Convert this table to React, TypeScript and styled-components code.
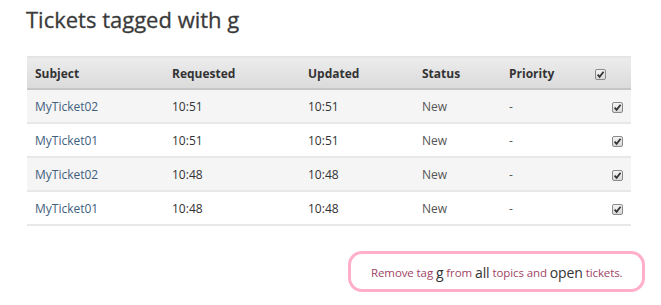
import styled, { createGlobalStyle } from "styled-components";

type Ticket = {
    subject: string;
    requested: string;
    updated: string;
    status: string;
    priority: string;
};

const tickets: Ticket[] = [
    { subject: "MyTicket02", requested: "10:51", updated: "10:51", status: "New", priority: "-" },
    { subject: "MyTicket01", requested: "10:51", updated: "10:51", status: "New", priority: "-" },
    { subject: "MyTicket02", requested: "10:48", updated: "10:48", status: "New", priority: "-" },
    { subject: "MyTicket01", requested: "10:48", updated: "10:48", status: "New", priority: "-" },
];

const CheckBox = () => (
    <Box>
        <svg width="9" height="9" viewBox="0 0 9 9">
            <path d="M1.6 4.6 L3.6 6.8 L7.6 1.8" fill="none" stroke="#333" strokeWidth="1.8" />
        </svg>
    </Box>
);

const App = () => {
    return (
        <Page>
            <GlobalStyle />
            <Title>Tickets tagged with g</Title>

            <Table>
                <colgroup>
                    <col style={{ width: 137 }} />
                    <col style={{ width: 136 }} />
                    <col style={{ width: 114 }} />
                    <col style={{ width: 87 }} />
                    <col style={{ width: 86 }} />
                    <col style={{ width: 44 }} />
                </colgroup>
                <thead>
                    <tr>
                        <Th>Subject</Th>
                        <Th>Requested</Th>
                        <Th>Updated</Th>
                        <Th>Status</Th>
                        <Th>Priority</Th>
                        <Th><CheckBox /></Th>
                    </tr>
                </thead>
                <tbody>
                    {tickets.map((t, i) => (
                        <Row key={i} $striped={i % 2 === 0}>
                            <Td><SubjectLink>{t.subject}</SubjectLink></Td>
                            <Td>{t.requested}</Td>
                            <Td>{t.updated}</Td>
                            <Td $muted>{t.status}</Td>
                            <Td $muted>{t.priority}</Td>
                            <CheckCell><CheckBox /></CheckCell>
                        </Row>
                    ))}
                </tbody>
            </Table>

            <Footer>
                <Notice>
                    Remove tag <Strong>g</Strong> from <Strong>all</Strong> topics and{" "}
                    <Strong>open</Strong> tickets.
                </Notice>
            </Footer>
        </Page>
    );
};

// --- Styled Components ---

const GlobalStyle = createGlobalStyle`
    body {
        margin: 0;
        background: #fff;
        font-family: "Open Sans", "Noto Sans", sans-serif;
    }
`;

const Page = styled.div`
    width: 661px;
    height: 305px;
    padding: 0 30px 0 27px;
    box-sizing: border-box;
    overflow: hidden;
`;

const Title = styled.h1`
    margin: 0 0 0 -1px;
    padding: 4px 0 0 0;
    height: 56px;
    box-sizing: border-box;
    font-size: 22px;
    font-weight: 400;
    color: #3a3a3a;
    -webkit-text-stroke: 0.3px #3a3a3a;
`;

const Table = styled.table`
    width: 604px;
    border-collapse: collapse;
    table-layout: fixed;
    border-top: 2px solid #e4e4e4;
`;

const Th = styled.th`
    height: 30px;
    padding: 0 8px;
    text-align: left;
    font-size: 12px;
    font-weight: 700;
    color: #333;
    background: linear-gradient(#ececec, #dcdbdc);
    border-bottom: 2px solid #c6c6c6;
    vertical-align: middle;
`;

const Row = styled.tr<{ $striped: boolean }>`
    height: 34px;
    background: ${props => (props.$striped ? "#f5f5f5" : "#fff")};
    border-bottom: 2px solid #e8e8e8;
`;

const Td = styled.td<{ $muted?: boolean }>`
    padding: 1px 8px 0;
    font-size: 12px;
    color: ${props => (props.$muted ? "#555" : "#333")};
    vertical-align: middle;
`;

const SubjectLink = styled.span`
    color: #41607e;
`;

const CheckCell = styled.td`
    padding: 0 8px 0 0;
    text-align: right;
    vertical-align: middle;
`;

const Box = styled.span`
    display: inline-flex;
    align-items: center;
    justify-content: center;
    width: 11px;
    height: 11px;
    box-sizing: border-box;
    border: 1px solid #8a8a8a;
    border-radius: 2px;
    background: linear-gradient(#f4f4f4, #d8d8d8);
    vertical-align: middle;
`;

const Footer = styled.div`
    display: flex;
    justify-content: flex-end;
    padding-top: 25px;
    margin-right: -14px;
`;

const Notice = styled.div`
    width: 297px;
    height: 41px;
    box-sizing: border-box;
    border: 3px solid #ffafc9;
    border-radius: 14px;
    display: flex;
    align-items: center;
    padding: 1px 0 0 20px;
    font-size: 11.5px;
    letter-spacing: -0.1px;
    color: #a04565;
    white-space: pre;
`;

const Strong = styled.span`
    font-size: 14px;
    color: #333;
`;

export default App;
